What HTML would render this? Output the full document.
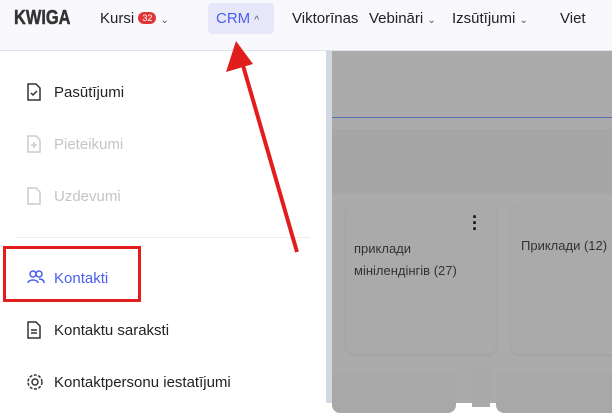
<!DOCTYPE html><html><head><style>
body{margin:0;width:612px;height:403px;overflow:hidden;position:relative;font-family:"Liberation Sans",sans-serif;background:#fff}
.hdr{position:absolute;left:0;top:0;width:612px;height:50px;background:#f8f8fd;border-bottom:1px solid #e2e2ea}
.n{position:absolute;top:10px;font-size:15px;color:#222}
.side{position:absolute;left:0;top:51px;width:326px;height:352px;background:#fff}
.strip{position:absolute;left:326px;top:51px;width:6px;height:352px;background:#d2d8e2}
.main{position:absolute;left:332px;top:51px;width:280px;height:352px;background:#ababab}
.it{position:absolute;left:54px;font-size:15px;color:#222}
.ic{position:absolute;left:26px}
</style></head><body>
<div class="hdr">
<div style="position:absolute;left:14px;top:7px;font-size:20px;font-weight:bold;color:#333;transform:scaleX(.82);transform-origin:left;-webkit-text-stroke:0.5px #333">KWIGA</div>
<div class="n" style="left:100px">Kursi <span style="display:inline-block;background:#e03535;color:#fff;font-size:9px;border-radius:8px;padding:1px 4px;vertical-align:2px">32</span> <span style="font-size:10px;color:#555">⌄</span></div>
<div style="position:absolute;left:208px;top:3px;width:66px;height:31px;background:#e6e7f8;border-radius:4px"></div>
<div class="n" style="left:216px;color:#4a5ef0">CRM <span style="font-size:10px;color:#555">^</span></div>
<div class="n" style="left:292px">Viktorīnas</div>
<div class="n" style="left:369px">Vebināri <span style="font-size:10px;color:#555">⌄</span></div>
<div class="n" style="left:452px">Izsūtījumi <span style="font-size:10px;color:#555">⌄</span></div>
<div class="n" style="left:560px">Viet</div>
</div>
<div class="side"></div>
<svg class="ic" style="top:83px" width="16" height="18" viewBox="0 0 16 18" fill="none" stroke="#333" stroke-width="1.5"><path d="M2 1h8l4 4v12H2z"/><path d="M5 10l2 2 4-4"/></svg>
<div class="it" style="top:84px">Pasūtījumi</div>
<svg class="ic" style="top:135px" width="16" height="18" viewBox="0 0 16 18" fill="none" stroke="#ccc" stroke-width="1.5"><path d="M2 1h8l4 4v12H2z"/><path d="M8 7v6M5 10h6"/></svg>
<div class="it" style="top:136px;color:#c4c4c4">Pieteikumi</div>
<svg class="ic" style="top:187px" width="16" height="18" viewBox="0 0 16 18" fill="none" stroke="#ccc" stroke-width="1.5"><path d="M2 1h8l4 4v12H2z"/></svg>
<div class="it" style="top:188px;color:#c4c4c4">Uzdevumi</div>
<div style="position:absolute;left:16px;top:237px;width:294px;height:1px;background:#eee"></div>
<div style="position:absolute;left:3px;top:246px;width:132px;height:50px;border:3px solid #e21d1d"></div>
<svg class="ic" style="top:270px;left:27px" width="18" height="14" viewBox="0 0 18 14" fill="none" stroke="#4a5ef0" stroke-width="1.5"><circle cx="6" cy="4" r="3"/><circle cx="12" cy="4" r="3"/><path d="M1 13c0-4 10-4 10 0M12 9c3 0 5 1 5 4"/></svg>
<div class="it" style="top:270px;color:#4a5ef0">Kontakti</div>
<svg class="ic" style="top:321px" width="16" height="18" viewBox="0 0 16 18" fill="none" stroke="#333" stroke-width="1.5"><path d="M2 1h8l4 4v12H2z"/><path d="M5 9h6M5 12h6"/></svg>
<div class="it" style="top:322px">Kontaktu saraksti</div>
<svg class="ic" style="top:373px" width="18" height="18" viewBox="0 0 18 18" fill="none" stroke="#333" stroke-width="1.5"><circle cx="9" cy="9" r="3"/><circle cx="9" cy="9" r="7" stroke-dasharray="3 1.5"/></svg>
<div class="it" style="top:374px">Kontaktpersonu iestatījumi</div>
<div class="strip"></div>
<div class="main">
<div style="position:absolute;left:0;top:66px;width:280px;height:1px;background:#5c6fb0"></div>
<div style="position:absolute;left:0;top:78px;width:280px;height:65px;background:#a6a6a6"></div>
<div style="position:absolute;left:14px;top:154px;width:150px;height:149px;background:#aaa;border-radius:8px;box-shadow:0 1px 3px rgba(0,0,0,.08)"></div>
<div style="position:absolute;left:179px;top:154px;width:110px;height:149px;background:#aaa;border-radius:8px;box-shadow:0 1px 3px rgba(0,0,0,.08)"></div>
<div style="position:absolute;left:140px;top:163px;font-size:18px;line-height:6px;color:#111;font-weight:bold">·<br>·<br>·</div>
<div style="position:absolute;left:22px;top:187px;font-size:13px;color:#333;line-height:22px">приклади<br>мінілендінгів (27)</div>
<div style="position:absolute;left:189px;top:187px;font-size:13px;color:#333">Приклади (12)</div>
<div style="position:absolute;left:0;top:322px;width:124px;height:40px;background:#a8a8a8;border-radius:8px"></div>
<div style="position:absolute;left:140px;top:316px;width:18px;height:40px;background:#a9a9a9"></div>
<div style="position:absolute;left:164px;top:322px;width:130px;height:40px;background:#a8a8a8;border-radius:8px"></div>
</div>
<svg style="position:absolute;left:0;top:0" width="612" height="403"><line x1="297" y1="252" x2="242" y2="62" stroke="#e21d1d" stroke-width="4"/><polygon points="236,41 226,72 253,64" fill="#e21d1d"/></svg>
</body></html>
